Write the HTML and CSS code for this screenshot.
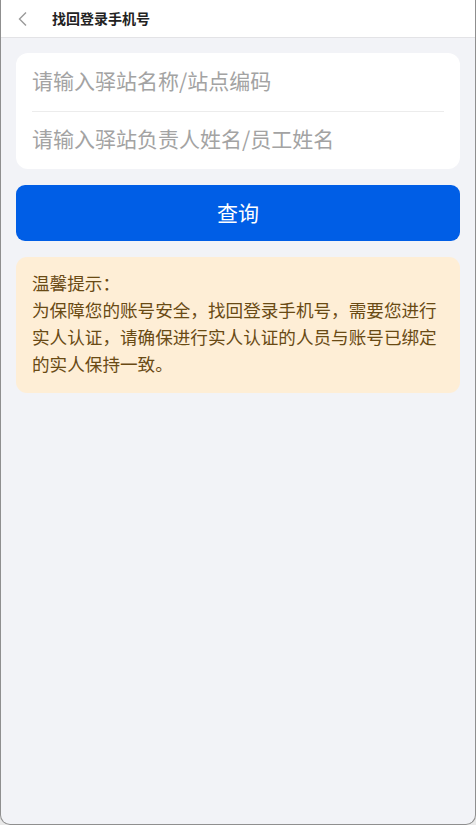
FILE: index.html
```html
<!doctype html>
<html lang="zh-CN">
  <head>
    <meta charset="utf-8">
    <meta name="viewport" content="width=device-width, initial-scale=1.0">
    <title>找回登录手机号</title>
    <link rel="stylesheet" href="styles.css">
  </head>
  <body>
    <div class="window">
      <header class="nav">
        <a class="nav-back" href="#" aria-label="返回">
          <svg width="12" height="16" viewBox="0 0 12 16">
            <path d="M9 1.5 L2.5 8 L9 14.5" fill="none" stroke="#9a9a9a" stroke-width="1.4"/>
          </svg>
        </a>
        <h1 class="nav-title">找回登录手机号</h1>
      </header>

      <main class="content">
        <div class="form-card">
          <input class="field" type="text" placeholder="请输入驿站名称/站点编码">
          <input class="field" type="text" placeholder="请输入驿站负责人姓名/员工姓名">
        </div>

        <button class="submit">查询</button>

        <div class="tips">
          <p>温馨提示：</p>
          <p>为保障您的账号安全，找回登录手机号，需要您进行实人认证，请确保进行实人认证的人员与账号已绑定的实人保持一致。</p>
        </div>
      </main>
    </div>
  </body>
</html>
```

FILE: styles.css
```css
* {
  box-sizing: border-box;
}

html, body {
  margin: 0;
  height: 100%;
}

body {
  background: #e9e9e9;
  font-family: "Noto Sans CJK SC", "Noto Sans", sans-serif;
}

.window {
  height: 825px;
  background: #f2f3f7;
  border: 1px solid #8f8f8f;
  border-top: none;
  border-radius: 0 0 10px 10px;
  overflow: hidden;
}

.nav {
  height: 38px;
  background: #fff;
  border-bottom: 1px solid #e3e3e6;
  display: flex;
  align-items: center;
}

.nav-back {
  display: flex;
  width: 51px;
  padding-left: 16px;
}

.nav-title {
  margin: 0 0 1px;
  font-size: 14px;
  font-weight: bold;
  color: #222;
}

.content {
  padding: 15px 15px 0;
  display: flex;
  flex-direction: column;
  gap: 16px;
}

.form-card {
  background: #fff;
  border-radius: 12px;
  padding: 0 16px;
  display: flex;
  flex-direction: column;
}

.field {
  height: 58px;
  border: none;
  outline: none;
  padding: 0 0 5px;
  font-family: inherit;
  font-size: 21px;
  color: #333;
  background: transparent;
}

.field + .field {
  border-top: 1px solid #ececec;
}

.field::placeholder {
  color: #a3a3a3;
}

.submit {
  height: 56px;
  border: none;
  border-radius: 9px;
  padding: 0 0 3px;
  background: #005ee6;
  color: #fff;
  font-family: inherit;
  font-size: 21px;
}

.tips {
  background: #feeed6;
  border-radius: 11px;
  padding: 12px 10px 16px 16px;
  color: #694a14;
  font-size: 17.6px;
  line-height: 27px;
}

.tips p {
  margin: 0;
}
```
